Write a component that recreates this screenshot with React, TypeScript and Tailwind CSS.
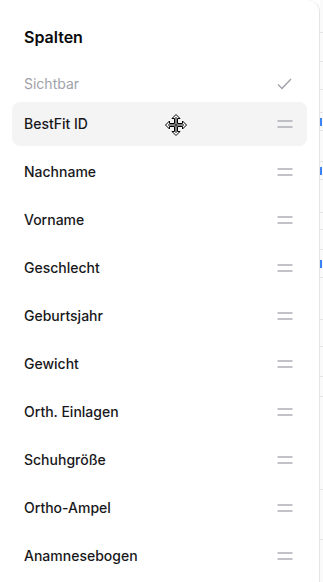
import React from 'react';

const columns = [
  'BestFit ID',
  'Nachname',
  'Vorname',
  'Geschlecht',
  'Geburtsjahr',
  'Gewicht',
  'Orth. Einlagen',
  'Schuhgröße',
  'Ortho-Ampel',
  'Anamnesebogen',
];

// rows of the table peeking out behind the panel
const bgRows = [33, 29, 28, 23, 18, 31, 18, 33, 17, 20, 28, 42, 27, 30, 20, 93, 50];

const DragHandle = () => (
  <svg width="16" height="8" viewBox="0 0 16 8" className="shrink-0">
    <line x1="0.5" y1="1" x2="15.5" y2="1" stroke="#a1a1aa" strokeWidth="1.3" />
    <line x1="0.5" y1="7" x2="15.5" y2="7" stroke="#a1a1aa" strokeWidth="1.3" />
  </svg>
);

const MoveCursor = () => (
  <svg width="24" height="24" viewBox="0 0 24 24">
    <path
      d="M12 1.5 L16 5.5 L13.5 5.5 L13.5 10.5 L18.5 10.5 L18.5 8 L22.5 12 L18.5 16 L18.5 13.5 L13.5 13.5 L13.5 18.5 L16 18.5 L12 22.5 L8 18.5 L10.5 18.5 L10.5 13.5 L5.5 13.5 L5.5 16 L1.5 12 L5.5 8 L5.5 10.5 L10.5 10.5 L10.5 5.5 L8 5.5 Z"
      fill="#fff"
      stroke="#000"
      strokeWidth="1"
      strokeLinejoin="miter"
    />
    <line x1="12" y1="4" x2="12" y2="20" stroke="#000" strokeWidth="1" />
    <line x1="4" y1="12" x2="20" y2="12" stroke="#000" strokeWidth="1" />
  </svg>
);

const App = () => {
  return (
    <div
      className="w-[323px] h-[582px] flex overflow-hidden bg-white"
      style={{ fontFamily: 'Inter, "Noto Sans", sans-serif' }}
    >
      <aside className="w-[320px] shrink-0 bg-white border-r border-[#e4e4e7] rounded-tr-xl px-3 pt-[25px] relative z-10">
        <h2 className="px-3 h-6 flex items-center text-base font-semibold text-[#09090b]">Spalten</h2>

        <div className="mt-[19px] h-8 px-3 pr-[15px] flex items-center justify-between">
          <span className="text-sm text-[#a1a1aa]">Sichtbar</span>
          <svg width="15" height="12" viewBox="0 0 15 12">
            <path d="M1 6.5 L5 10.5 L14 1" fill="none" stroke="#a1a1aa" strokeWidth="1.4" />
          </svg>
        </div>

        <ul className="mt-[2px] flex flex-col gap-1">
          {columns.map((col, i) => (
            <li
              key={col}
              className={`h-11 pl-3 pr-[14px] flex items-center justify-between rounded-lg relative ${
                i === 0 ? 'bg-[#f4f4f5]' : ''
              }`}
            >
              <span className="text-sm font-medium text-[#18181b]">{col}</span>
              {i === 0 && (
                <span className="absolute left-[152px] top-[11px]">
                  <MoveCursor />
                </span>
              )}
              <DragHandle />
            </li>
          ))}
        </ul>
      </aside>

      <div className="flex-1 bg-[#fafafa] flex flex-col">
        {bgRows.map((h, i) => (
          <div
            key={i}
            className="border-b border-[#e4e4e7] shrink-0 flex items-center"
            style={{ height: h }}
          >
            {(i === 4 || i === 6 || i === 10) && <div className="w-[2px] h-[8px] bg-[#3b82f6]" />}
          </div>
        ))}
      </div>
    </div>
  );
};

export default App;
